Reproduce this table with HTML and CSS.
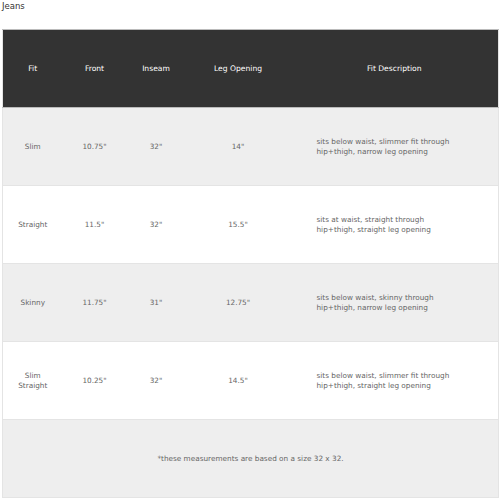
FILE: index.html
```html
<!DOCTYPE html>
<html>
<head>
<meta charset="utf-8">
<link rel="stylesheet" href="styles.css">
</head>
<body>
<div class="title">Jeans</div>
<table class="sizes">
  <colgroup>
    <col class="c-fit"><col class="c-front"><col class="c-inseam"><col class="c-leg"><col class="c-desc">
  </colgroup>
  <thead>
    <tr><th>Fit</th><th>Front</th><th>Inseam</th><th>Leg Opening</th><th>Fit Description</th></tr>
  </thead>
  <tbody>
    <tr class="alt"><td>Slim</td><td>10.75"</td><td>32"</td><td>14"</td><td class="desc">sits below waist, slimmer fit through<br>hip+thigh, narrow leg opening</td></tr>
    <tr><td>Straight</td><td>11.5"</td><td>32"</td><td>15.5"</td><td class="desc">sits at waist, straight through<br>hip+thigh, straight leg opening</td></tr>
    <tr class="alt"><td>Skinny</td><td>11.75"</td><td>31"</td><td>12.75"</td><td class="desc">sits below waist, skinny through<br>hip+thigh, narrow leg opening</td></tr>
    <tr><td>Slim<br>Straight</td><td>10.25"</td><td>32"</td><td>14.5"</td><td class="desc">sits below waist, slimmer fit through<br>hip+thigh, straight leg opening</td></tr>
    <tr class="alt note"><td colspan="5">*these measurements are based on a size 32 x 32.</td></tr>
  </tbody>
</table>
</body>
</html>
```
FILE: styles.css
```css
html, body { margin: 0; padding: 0; background: #fff; }
body {
  font-family: "DejaVu Sans", "Liberation Sans", sans-serif;
  color: #666;
  padding: 0 2px;
}
.title {
  font-size: 8.5px;
  color: #333;
  height: 29px;
  line-height: 12px;
}
.sizes {
  width: 496px;
  border-collapse: collapse;
  table-layout: fixed;
  font-size: 7.3px;
  border-left: 1px solid #e4e4e4;
  border-right: 1px solid #e4e4e4;
}
.c-fit { width: 60px; }
.c-front { width: 64px; }
.c-inseam { width: 59px; }
.c-leg { width: 105px; }
.c-desc { width: 208px; }
.sizes th {
  background: #333;
  color: #fff;
  font-weight: normal;
  font-size: 7.6px;
  height: 77px;
  padding: 0;
  text-align: center;
  border-top: 1px solid #bbb;
  border-bottom: 1px solid #bbb;
}
.sizes td {
  height: 77px;
  padding: 0;
  text-align: center;
  border-bottom: 1px solid #e4e4e4;
  line-height: 10px;
}
.sizes tr.alt td { background: #eeeeee; }
.sizes td.desc { text-align: left; padding-left: 26px; }
```
